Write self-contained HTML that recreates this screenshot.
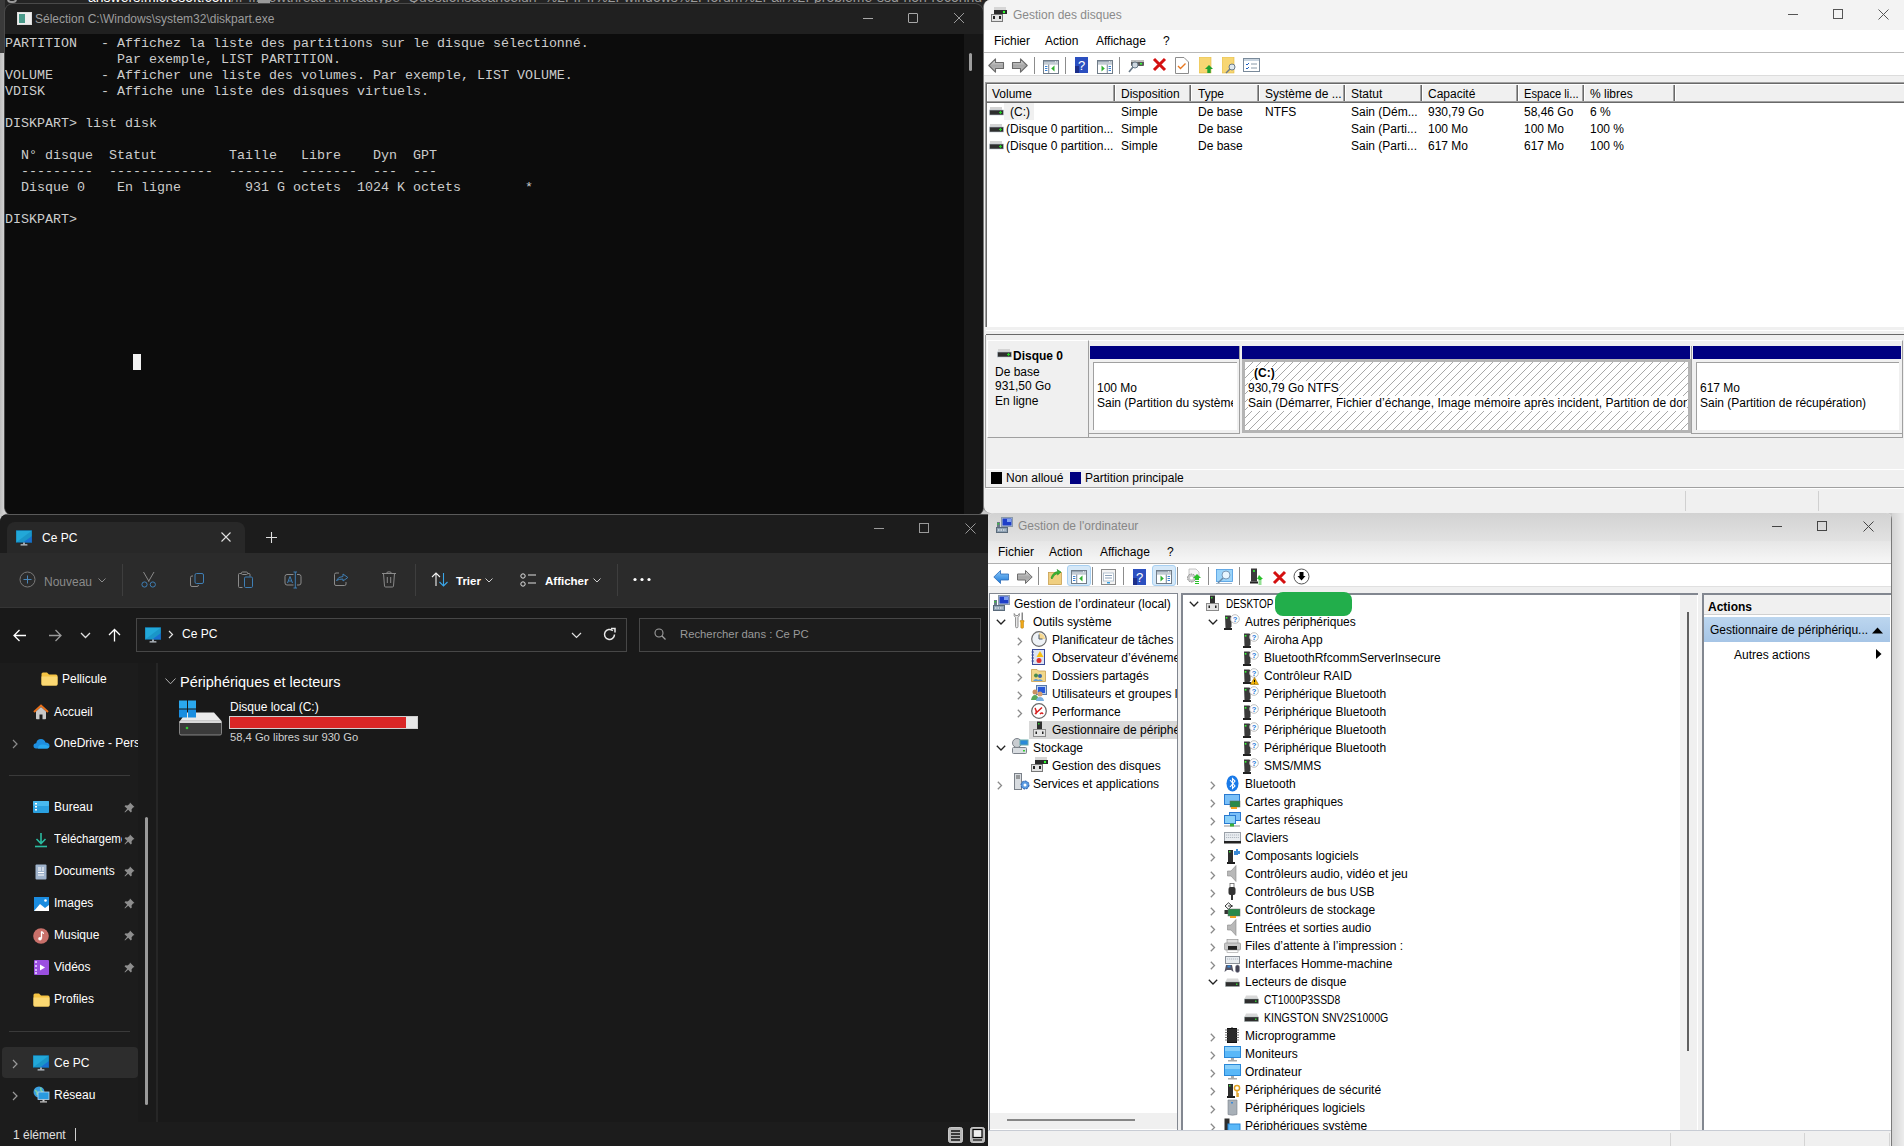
<!DOCTYPE html>
<html><head><meta charset="utf-8">
<style>
*{margin:0;padding:0;box-sizing:border-box}
html,body{width:1904px;height:1146px;overflow:hidden;background:#c9c9c9;font-family:"Liberation Sans",sans-serif;font-size:12px}
.a{position:absolute}
.t{position:absolute;white-space:pre;line-height:1}
/* CMD */
#cmd{left:5px;top:4px;width:978px;height:511px;background:#202020;border-radius:8px 8px 8px 8px;overflow:hidden;box-shadow:0 0 0 1px #4a4a4a}
#cmdcon{left:0;top:30px;width:959px;height:481px;background:#0c0c0c}
#cmdsb{left:959px;top:30px;width:19px;height:481px;background:#171717}
.con{position:absolute;left:0;font-family:"Liberation Mono",monospace;font-size:13.333px;line-height:16px;color:#cccccc;white-space:pre}
</style></head><body><svg width="0" height="0" style="position:absolute"><defs><linearGradient id="gArr" x1="0" y1="0" x2="0" y2="1"><stop offset="0" stop-color="#e4e4e4"/><stop offset="0.5" stop-color="#a8a8a8"/><stop offset="1" stop-color="#bcbcbc"/></linearGradient></defs></svg>
<!-- browser strip behind -->
<div class="a" style="left:0;top:0;width:990px;height:8px;background:#242424;overflow:hidden">
<div class="t" style="left:88px;top:-10px;font-size:14px;color:#fff">answers.microsoft.com<span style="color:#9a9a9a">/fr-fr/newthread?threadtype=Questions&amp;cancelurl=%2Ffr-fr%2Fwindows%2Fforum%2Fall%2Fprobleme-ssd-non-reconnu</span></div>
<div class="a" style="left:7px;top:-6px;width:10px;height:9px;border:2px solid #9a9a9a;border-radius:4px"></div>
<div class="a" style="left:258px;top:0;width:12px;height:3px;background:#9a9a9a"></div>
</div>
<div class="a" style="left:0;top:0;width:5px;height:53px;background:#3a3a3a"></div><div class="a" style="left:0;top:53px;width:5px;height:462px;background:linear-gradient(90deg,#bdbdbd,#d8d8d8)"></div>

<!-- CMD window -->
<div id="cmd" class="a">
  <div class="a" style="left:12px;top:8px;width:15px;height:13px;background:#eee;border:1px solid #ddd"></div>
  <div class="a" style="left:14px;top:10px;width:6px;height:9px;background:#4a9a8a"></div>
  <div class="t" style="left:30px;top:9px;color:#9d9d9d;font-size:12px">Sélection C:\Windows\system32\diskpart.exe</div>
  <div class="a" style="left:858px;top:14px;width:10px;height:1px;background:#a8a8a8"></div>
  <div class="a" style="left:903px;top:9px;width:10px;height:10px;border:1px solid #a8a8a8;border-radius:1px"></div>
  <svg class="a" style="left:948px;top:8px" width="12" height="12"><path d="M1 1L11 11M11 1L1 11" stroke="#a8a8a8" stroke-width="0.9"/></svg>
  <div id="cmdcon" class="a">
<div class="con" style="top:2px">PARTITION   - Affichez la liste des partitions sur le disque sélectionné.
              Par exemple, LIST PARTITION.
VOLUME      - Afficher une liste des volumes. Par exemple, LIST VOLUME.
VDISK       - Affiche une liste des disques virtuels.

DISKPART&gt; list disk

  N° disque  Statut         Taille   Libre    Dyn  GPT
  ---------  -------------  -------  -------  ---  ---
  Disque 0    En ligne        931 G octets  1024 K octets        *

DISKPART&gt; </div>
    <div class="a" style="left:128px;top:320px;width:8px;height:16px;background:#f2f2f2"></div>
  </div>
  <div id="cmdsb" class="a"><div class="a" style="left:5px;top:19px;width:3px;height:18px;background:#9e9e9e;border-radius:2px"></div></div>
</div>


<!-- DISK MGMT -->
<div id="dm" class="a" style="left:983px;top:0;width:921px;height:513px;background:#f0f0f0;border-left:1px solid #7a7a7a;border-radius:7px 0 0 7px;overflow:hidden">
  <!-- title -->
  <div class="a" style="left:0;top:0;width:920px;height:30px;background:#f3f3f3"></div>
  <svg class="a" style="left:7px;top:6px" width="18" height="17">
    <rect x="3" y="1" width="12" height="3" fill="#d6d6d6"/><rect x="3" y="4" width="13" height="4" fill="#2a2a2a"/><circle cx="13" cy="6" r="1.2" fill="#3f3"/>
    <rect x="0.5" y="8.5" width="11" height="7" fill="#e2e2e2" stroke="#777"/><rect x="2" y="10" width="2" height="3" fill="#222"/><rect x="8" y="10" width="2" height="3" fill="#222"/>
  </svg>
  <div class="t" style="left:29px;top:9px;color:#8a8a8a;font-size:12px">Gestion des disques</div>
  <div class="a" style="left:804px;top:14px;width:10px;height:1px;background:#555"></div>
  <div class="a" style="left:849px;top:9px;width:10px;height:10px;border:1px solid #555"></div>
  <svg class="a" style="left:894px;top:9px" width="11" height="11"><path d="M0.5 0.5L10.5 10.5M10.5 0.5L0.5 10.5" stroke="#555" stroke-width="1"/></svg>
  <!-- menu -->
  <div class="a" style="left:0;top:30px;width:920px;height:22px;background:#fff"></div>
  <div class="t" style="left:10px;top:35px;color:#000">Fichier</div>
  <div class="t" style="left:61px;top:35px;color:#000">Action</div>
  <div class="t" style="left:112px;top:35px;color:#000">Affichage</div>
  <div class="t" style="left:179px;top:35px;color:#000">?</div>
  <div class="a" style="left:0;top:52px;width:920px;height:1px;background:#b9b9b9"></div>
  <!-- toolbar -->
  <div class="a" style="left:0;top:53px;width:920px;height:22px;background:#fff"></div>
  <div class="a" style="left:0;top:75px;width:920px;height:1px;background:#dcdcdc"></div>
  <svg class="a" style="left:4px;top:57px" width="17" height="16"><path d="M0.8 8.5L7.5 1.8V5.5H15.5V11.5H7.5V15.2Z" fill="url(#gArr)" stroke="#6a6a6a" stroke-width="1.1" stroke-linejoin="round"/></svg><svg class="a" style="left:27px;top:57px" width="17" height="16"><path d="M16.2 8.5L9.5 1.8V5.5H1.5V11.5H9.5V15.2Z" fill="url(#gArr)" stroke="#6a6a6a" stroke-width="1.1" stroke-linejoin="round"/></svg><div class="a" style="left:50px;top:57px;width:1px;height:17px;background:#8c8c8c"></div><svg class="a" style="left:59px;top:60px" width="16" height="14"><rect x="0.5" y="0.5" width="15" height="13" fill="#fff" stroke="#707c88"/><rect x="1" y="1" width="14" height="1.6" fill="#98a6b4"/><rect x="12" y="1.3" width="1" height="1" fill="#fff"/><rect x="13.8" y="1.3" width="0.8" height="1" fill="#fff"/><rect x="1" y="3.3" width="14" height="1.2" fill="#a8b4c0"/><rect x="2" y="6" width="2.4" height="1" fill="#3a82d4"/><rect x="2" y="8" width="2.4" height="1" fill="#3a82d4"/><rect x="2" y="10" width="2.4" height="1" fill="#3a82d4"/><rect x="5.3" y="4.5" width="0.9" height="9" fill="#6a7a8a"/><path d="M11.5 5.5L8.2 8.5L11.5 11.5Z" fill="#30b030"/></svg><div class="a" style="left:81px;top:57px;width:1px;height:17px;background:#8c8c8c"></div><svg class="a" style="left:91px;top:57px" width="14" height="16"><rect x="0" y="0" width="13" height="16" fill="#2b4fc0"/><rect x="0" y="9" width="4" height="7" fill="#1c2f8a"/><text x="6.5" y="12.5" font-family="Liberation Sans" font-size="13" fill="#fff" text-anchor="middle">?</text></svg><svg class="a" style="left:113px;top:60px" width="16" height="14"><rect x="0.5" y="0.5" width="15" height="13" fill="#fff" stroke="#707c88"/><rect x="1" y="1" width="14" height="1.6" fill="#98a6b4"/><rect x="12" y="1.3" width="1" height="1" fill="#fff"/><rect x="13.8" y="1.3" width="0.8" height="1" fill="#fff"/><rect x="1" y="3.3" width="14" height="1.2" fill="#a8b4c0"/><rect x="11.6" y="6" width="2.4" height="1" fill="#3a82d4"/><rect x="11.6" y="8" width="2.4" height="1" fill="#3a82d4"/><rect x="11.6" y="10" width="2.4" height="1" fill="#3a82d4"/><rect x="9.8" y="4.5" width="0.9" height="9" fill="#6a7a8a"/><path d="M4.5 5.5L7.8 8.5L4.5 11.5Z" fill="#30b030"/></svg><div class="a" style="left:135px;top:57px;width:1px;height:17px;background:#8c8c8c"></div><svg class="a" style="left:144px;top:57px" width="16" height="16"><rect x="3" y="3" width="13" height="6" fill="#5a5a5a" rx="1"/><rect x="3" y="3" width="13" height="2" fill="#bdbdbd"/><rect x="12" y="6" width="2" height="1.5" fill="#3f3"/><circle cx="7" cy="8" r="3" fill="#cfd8e0" stroke="#6a7a88"/><path d="M5 10L1 15" stroke="#6a7a88" stroke-width="1.6"/></svg><svg class="a" style="left:168px;top:57px" width="15" height="15"><path d="M2 2L13 13M13 2L2 13" stroke="#d41010" stroke-width="3"/></svg><svg class="a" style="left:191px;top:57px" width="14" height="17"><path d="M0.5 0.5H9L13.5 5V16.5H0.5Z" fill="#fff" stroke="#8c8c8c"/><path d="M3 9L5.5 11.5L10.5 6.5" stroke="#e87820" stroke-width="1.4" fill="none"/></svg><svg class="a" style="left:215px;top:57px" width="15" height="17"><rect x="0" y="0" width="12" height="16" fill="#f7d673" stroke="#e0b840" stroke-width="0.6"/><path d="M10 8L14 12H11.7V16H8.3V12H6Z" fill="#1fa030"/></svg><svg class="a" style="left:238px;top:57px" width="15" height="17"><rect x="0" y="0" width="12" height="16" fill="#f7d673" stroke="#e0b840" stroke-width="0.6"/><circle cx="10" cy="10" r="3" fill="#dfe8ee" stroke="#6a7a88"/><path d="M8 12L4 16" stroke="#6a7a88" stroke-width="1.5"/></svg><svg class="a" style="left:259px;top:58px" width="17" height="14"><rect x="0.5" y="0.5" width="16" height="13" fill="#fff" stroke="#7a8a9a"/><rect x="1" y="1" width="15" height="2" fill="#c8d4e0"/><path d="M3 6L4 7L6 5M3 10L4 11L6 9" stroke="#2060c0" stroke-width="1" fill="none"/><path d="M8 6H14M8 10H14" stroke="#8a9aa8"/></svg>
  <!-- list view -->
  <div class="a" style="left:1px;top:82px;width:920px;height:245px;background:#fff;border-top:1px solid #a0a0a0;border-left:1px solid #a0a0a0"></div>
  <div class="a" style="left:2px;top:83px;width:919px;height:1px;background:#696969"></div>
  <div class="a" style="left:2px;top:83px;width:1px;height:244px;background:#696969"></div>
  <div class="a" style="left:3px;top:84px;width:918px;height:17px;background:#f0f0f0;border-top:1px solid #fff;border-left:1px solid #fff"></div><div class="a" style="left:3px;top:101px;width:918px;height:1px;background:#a0a0a0"></div><div class="a" style="left:3px;top:102px;width:918px;height:1px;background:#696969"></div><div class="a" style="left:129px;top:85px;width:1px;height:16px;background:#a0a0a0"></div><div class="a" style="left:130px;top:85px;width:1px;height:16px;background:#696969"></div><div class="a" style="left:131px;top:85px;width:1px;height:16px;background:#fff"></div><div class="a" style="left:205px;top:85px;width:1px;height:16px;background:#a0a0a0"></div><div class="a" style="left:206px;top:85px;width:1px;height:16px;background:#696969"></div><div class="a" style="left:207px;top:85px;width:1px;height:16px;background:#fff"></div><div class="a" style="left:273px;top:85px;width:1px;height:16px;background:#a0a0a0"></div><div class="a" style="left:274px;top:85px;width:1px;height:16px;background:#696969"></div><div class="a" style="left:275px;top:85px;width:1px;height:16px;background:#fff"></div><div class="a" style="left:359px;top:85px;width:1px;height:16px;background:#a0a0a0"></div><div class="a" style="left:360px;top:85px;width:1px;height:16px;background:#696969"></div><div class="a" style="left:361px;top:85px;width:1px;height:16px;background:#fff"></div><div class="a" style="left:436px;top:85px;width:1px;height:16px;background:#a0a0a0"></div><div class="a" style="left:437px;top:85px;width:1px;height:16px;background:#696969"></div><div class="a" style="left:438px;top:85px;width:1px;height:16px;background:#fff"></div><div class="a" style="left:532px;top:85px;width:1px;height:16px;background:#a0a0a0"></div><div class="a" style="left:533px;top:85px;width:1px;height:16px;background:#696969"></div><div class="a" style="left:534px;top:85px;width:1px;height:16px;background:#fff"></div><div class="a" style="left:598px;top:85px;width:1px;height:16px;background:#a0a0a0"></div><div class="a" style="left:599px;top:85px;width:1px;height:16px;background:#696969"></div><div class="a" style="left:600px;top:85px;width:1px;height:16px;background:#fff"></div><div class="a" style="left:689px;top:85px;width:1px;height:16px;background:#a0a0a0"></div><div class="a" style="left:690px;top:85px;width:1px;height:16px;background:#696969"></div><div class="a" style="left:691px;top:85px;width:1px;height:16px;background:#fff"></div><div class="t" style="left:8px;top:88px;color:#000">Volume</div><div class="t" style="left:137px;top:88px;color:#000">Disposition</div><div class="t" style="left:214px;top:88px;color:#000">Type</div><div class="t" style="left:281px;top:88px;color:#000">Système de ...</div><div class="t" style="left:367px;top:88px;color:#000">Statut</div><div class="t" style="left:444px;top:88px;color:#000">Capacité</div><div class="t" style="left:540px;top:88px;color:#000;transform:scaleX(0.93);transform-origin:0 0">Espace li...</div><div class="t" style="left:606px;top:88px;color:#000">% libres</div>
  <div class="a" style="left:20px;top:103px;width:30px;height:17px;background:#f0f0f0"></div><svg class="a" style="left:5px;top:107px" width="15" height="9"><rect x="1" y="0" width="12" height="3" fill="#d4d4d4"/><rect x="0.5" y="3" width="14" height="5" fill="#2e2e2e" stroke="#b8c4cc" stroke-width="0.6"/><path d="M10 5.5H13M11.5 4V7" stroke="#2c2" stroke-width="1.2"/></svg><div class="t" style="left:26px;top:106px;color:#000">(C:)</div><div class="t" style="left:137px;top:106px;color:#000">Simple</div><div class="t" style="left:214px;top:106px;color:#000">De base</div><div class="t" style="left:281px;top:106px;color:#000">NTFS</div><div class="t" style="left:367px;top:106px;color:#000">Sain (Dém...</div><div class="t" style="left:444px;top:106px;color:#000">930,79 Go</div><div class="t" style="left:540px;top:106px;color:#000">58,46 Go</div><div class="t" style="left:606px;top:106px;color:#000">6 %</div><svg class="a" style="left:5px;top:124px" width="15" height="9"><rect x="1" y="0" width="12" height="3" fill="#d4d4d4"/><rect x="0.5" y="3" width="14" height="5" fill="#2e2e2e" stroke="#b8c4cc" stroke-width="0.6"/><path d="M10 5.5H13M11.5 4V7" stroke="#2c2" stroke-width="1.2"/></svg><div class="t" style="left:22px;top:123px;color:#000">(Disque 0 partition...</div><div class="t" style="left:137px;top:123px;color:#000">Simple</div><div class="t" style="left:214px;top:123px;color:#000">De base</div><div class="t" style="left:367px;top:123px;color:#000">Sain (Parti...</div><div class="t" style="left:444px;top:123px;color:#000">100 Mo</div><div class="t" style="left:540px;top:123px;color:#000">100 Mo</div><div class="t" style="left:606px;top:123px;color:#000">100 %</div><svg class="a" style="left:5px;top:141px" width="15" height="9"><rect x="1" y="0" width="12" height="3" fill="#d4d4d4"/><rect x="0.5" y="3" width="14" height="5" fill="#2e2e2e" stroke="#b8c4cc" stroke-width="0.6"/><path d="M10 5.5H13M11.5 4V7" stroke="#2c2" stroke-width="1.2"/></svg><div class="t" style="left:22px;top:140px;color:#000">(Disque 0 partition...</div><div class="t" style="left:137px;top:140px;color:#000">Simple</div><div class="t" style="left:214px;top:140px;color:#000">De base</div><div class="t" style="left:367px;top:140px;color:#000">Sain (Parti...</div><div class="t" style="left:444px;top:140px;color:#000">617 Mo</div><div class="t" style="left:540px;top:140px;color:#000">617 Mo</div><div class="t" style="left:606px;top:140px;color:#000">100 %</div>
  <!-- splitter -->
  <div class="a" style="left:0;top:327px;width:920px;height:8px;background:#f0f0f0"></div>
  <div class="a" style="left:2px;top:330px;width:918px;height:1px;background:#fff"></div>
  <div class="a" style="left:2px;top:334px;width:918px;height:1px;background:#696969"></div>
  <div class="a" style="left:3px;top:340px;width:101px;height:98px;background:#f0f0f0;border-top:1px solid #fff;border-left:1px solid #fff;border-bottom:1px solid #a0a0a0"></div><svg class="a" style="left:13px;top:349px" width="15" height="9"><rect x="1" y="0" width="12" height="3" fill="#d4d4d4"/><rect x="0.5" y="3" width="14" height="5" fill="#2e2e2e" stroke="#b8c4cc" stroke-width="0.6"/><path d="M10 5.5H13M11.5 4V7" stroke="#2c2" stroke-width="1.2"/></svg><div class="t" style="left:29px;top:350px;color:#000;font-weight:bold">Disque 0</div><div class="t" style="left:11px;top:366px;color:#000">De base</div><div class="t" style="left:11px;top:380px;color:#000">931,50 Go</div><div class="t" style="left:11px;top:395px;color:#000">En ligne</div><div class="a" style="left:104px;top:340px;width:815px;height:98px;border-left:1px solid #a0a0a0;border-top:1px solid #fff;border-bottom:1px solid #a0a0a0;border-right:1px solid #a0a0a0"></div><div class="a" style="left:106px;top:346px;width:149px;height:13px;background:#000080"></div><div class="a" style="left:105px;top:359px;width:151px;height:75px;background:#f0f0f0;border-bottom:1px solid #a0a0a0"></div><div class="a" style="left:109px;top:362px;width:144px;height:68px;background:#fff;border-top:1px solid #a0a0a0;border-left:1px solid #a0a0a0"></div><div class="a" style="left:255px;top:346px;width:1px;height:88px;background:#a0a0a0"></div><div class="a" style="left:113px;top:382px;width:136px;height:32px;overflow:hidden"><div class="t" style="left:0;top:0;color:#000">100 Mo</div><div class="t" style="left:0;top:15px;color:#000">Sain (Partition du système</div></div><div class="a" style="left:258px;top:346px;width:448px;height:13px;background:#000080"></div><div class="a" style="left:258px;top:359px;width:449px;height:74px;background:#b4b4b4"></div><svg class="a" style="left:261px;top:362px" width="443" height="68"><defs><pattern id="hatch" width="8" height="8" patternUnits="userSpaceOnUse"><rect width="8" height="8" fill="#fff"/><path d="M-1 9L9 -1M7 9L9 7M-1 1L1 -1" stroke="#a8a8a8" stroke-width="1"/></pattern></defs><rect width="443" height="68" fill="url(#hatch)"/></svg><div class="a" style="left:707px;top:346px;width:1px;height:88px;background:#a0a0a0"></div><div class="a" style="left:264px;top:367px;width:439px;height:48px;overflow:hidden"><div class="t" style="left:6px;top:-1px;color:#000;font-weight:bold;background:#fff;padding:1px 0 2px">(C:)</div><div class="t" style="left:0;top:14px;color:#000;background:#fff;padding:1px 0 2px">930,79 Go NTFS</div><div class="t" style="left:0;top:29px;color:#000;background:#fff;padding:1px 0 2px">Sain (Démarrer, Fichier d’échange, Image mémoire après incident, Partition de données de base)</div></div><div class="a" style="left:709px;top:346px;width:208px;height:13px;background:#000080"></div><div class="a" style="left:708px;top:359px;width:210px;height:75px;background:#f0f0f0;border-bottom:1px solid #a0a0a0"></div><div class="a" style="left:712px;top:362px;width:203px;height:68px;background:#fff;border-top:1px solid #a0a0a0;border-left:1px solid #a0a0a0"></div><div class="t" style="left:716px;top:382px;color:#000">617 Mo</div><div class="t" style="left:716px;top:397px;color:#000">Sain (Partition de récupération)</div>
  <!-- legend -->
  <div class="a" style="left:1px;top:335px;width:1px;height:153px;background:#a0a0a0"></div><div class="a" style="left:2px;top:469px;width:918px;height:1px;background:#fff"></div>
  <div class="a" style="left:7px;top:472px;width:11px;height:12px;background:#000"></div>
  <div class="t" style="left:22px;top:472px;color:#000">Non alloué</div>
  <div class="a" style="left:86px;top:472px;width:11px;height:12px;background:#000080"></div>
  <div class="t" style="left:101px;top:472px;color:#000">Partition principale</div>
  <div class="a" style="left:2px;top:487px;width:918px;height:1px;background:#a0a0a0"></div>
  <div class="a" style="left:2px;top:488px;width:918px;height:1px;background:#fff"></div>
  <div class="a" style="left:701px;top:491px;width:1px;height:20px;background:#d0d0d0"></div>
  <div class="a" style="left:834px;top:491px;width:1px;height:20px;background:#d0d0d0"></div>
</div>

<!-- EXPLORER -->
<div class="a" style="left:0;top:514px;width:12px;height:12px;background:#c8c8c8"></div><div id="ex" class="a" style="left:0;top:514px;width:988px;height:632px;background:#191919;overflow:hidden;border-radius:8px 0 0 0">
  <div class="a" style="left:0;top:0;width:988px;height:1px;background:#5a5a5a"></div>
  <div class="a" style="left:0;top:1px;width:988px;height:38px;background:#1c1c1c"></div>
  <div class="a" style="left:7px;top:8px;width:238px;height:40px;background:#282828;border-radius:8px 8px 0 0"></div>
  <svg class="a" style="left:16px;top:16px" width="16" height="16" viewBox="0 0 16 16"><rect x="0" y="0.5" width="16" height="12" fill="#1a96c8"/><path d="M0 0.5H16L0 12.5Z" fill="#22a8d8"/><path d="M16 6L7 12.5H16Z" fill="#1a6fd0"/><rect x="0" y="0.5" width="16" height="12" fill="none" stroke="#0f5a8a" stroke-width="0.5"/><rect x="7.2" y="12.5" width="1.6" height="2" fill="#c0c8d0"/><rect x="4.5" y="14.3" width="7" height="1.2" rx="0.5" fill="#c0c8d0"/></svg>
  <div class="t" style="left:42px;top:18px;color:#fff">Ce PC</div>
  <svg class="a" style="left:221px;top:18px" width="10" height="10"><path d="M0.5 0.5L9.5 9.5M9.5 0.5L0.5 9.5" stroke="#e0e0e0" stroke-width="1.1"/></svg>
  <svg class="a" style="left:266px;top:18px" width="11" height="11"><path d="M5.5 0V11M0 5.5H11" stroke="#e0e0e0" stroke-width="1.1"/></svg>
  <div class="a" style="left:874px;top:14px;width:10px;height:1px;background:#9a9a9a"></div>
  <div class="a" style="left:919px;top:9px;width:10px;height:10px;border:1px solid #9a9a9a"></div>
  <svg class="a" style="left:965px;top:9px" width="11" height="11"><path d="M0.5 0.5L10.5 10.5M10.5 0.5L0.5 10.5" stroke="#9a9a9a" stroke-width="1"/></svg>
  <!-- toolbar -->
  <div class="a" style="left:0;top:39px;width:988px;height:54px;background:#2b2b2b"></div>
  <div class="a" style="left:0;top:93px;width:988px;height:1px;background:#353535"></div>
  <svg class="a" style="left:19px;top:57px" width="17" height="17"><circle cx="8.5" cy="8.5" r="7.5" fill="none" stroke="#7a7a7a" stroke-width="1"/><path d="M8.5 4.5V12.5M4.5 8.5H12.5" stroke="#4a86b8" stroke-width="1"/></svg><div class="t" style="left:44px;top:62px;color:#8a8a8a">Nouveau</div><svg class="a" style="left:98px;top:64px" width="8" height="5"><path d="M0.5 0.5L4 4L7.5 0.5" stroke="#8a8a8a" fill="none"/></svg><div class="a" style="left:122px;top:50px;width:1px;height:32px;background:#3e3e3e"></div><svg class="a" style="left:140px;top:57px" width="18" height="18"><path d="M3.5 1L9 10.5M14 1L8.5 10.5" stroke="#8a8a8a" stroke-width="1"/><circle cx="4.5" cy="13.5" r="2.6" fill="none" stroke="#3f7fb5" stroke-width="1"/><circle cx="12.8" cy="13.5" r="2.6" fill="none" stroke="#3f7fb5" stroke-width="1"/></svg><svg class="a" style="left:189px;top:58px" width="16" height="16"><path d="M4 4H3Q1.5 4 1.5 5.5V13Q1.5 14.5 3 14.5H8Q9.5 14.5 9.5 13" stroke="#8a8a8a" fill="none"/><rect x="6" y="1.5" width="8.5" height="10" rx="1.5" fill="none" stroke="#3f7fb5"/></svg><svg class="a" style="left:237px;top:57px" width="17" height="18"><path d="M4 2.5H2.5Q1.5 2.5 1.5 3.5V15.5Q1.5 16.5 2.5 16.5H5.5M11 2.5H12Q13 2.5 13 3.5V5.5" stroke="#8a8a8a" fill="none"/><rect x="4.5" y="1" width="6" height="2.5" rx="1" fill="none" stroke="#8a8a8a"/><rect x="7.5" y="6" width="8" height="10.5" rx="1.2" fill="none" stroke="#3f7fb5"/></svg><svg class="a" style="left:284px;top:57px" width="18" height="18"><path d="M9.5 3.5H3Q1 3.5 1 5.5V12Q1 14 3 14H9.5M13 3.5H15Q17 3.5 17 5.5V12Q17 14 15 14H13" stroke="#8a8a8a" fill="none"/><path d="M3.5 12L6 5.5L8.5 12M4.5 10H7.5" stroke="#3f7fb5" fill="none"/><path d="M11.3 1V17M9.5 1H13M9.5 17H13" stroke="#3f7fb5"/></svg><svg class="a" style="left:333px;top:57px" width="16" height="16"><path d="M6 2H3Q1.5 2 1.5 3.5V13Q1.5 14.5 3 14.5H11.5Q13 14.5 13 13V11" stroke="#8a8a8a" fill="none"/><path d="M3.5 9.5Q5 5.5 10 5.5V3L14.8 6.5L10 10V8Q6 8 3.5 9.5Z" stroke="#3f7fb5" fill="none" stroke-linejoin="round"/></svg><svg class="a" style="left:381px;top:57px" width="16" height="17"><path d="M1 2.5H15M5.5 2.5Q5.5 0.8 8 0.8Q10.5 0.8 10.5 2.5M2.5 2.5L3.5 15Q3.6 16 4.6 16H11.4Q12.4 16 12.5 15L13.5 2.5M6.3 6V12M9.7 6V12" stroke="#8a8a8a" fill="none"/></svg><div class="a" style="left:415px;top:50px;width:1px;height:32px;background:#3e3e3e"></div><svg class="a" style="left:431px;top:58px" width="18" height="15"><path d="M5 14V1M1 5L5 1L9 5" stroke="#f0f0f0" fill="none" stroke-width="1.1"/><path d="M12.5 1V14M8.5 10L12.5 14L16.5 10" stroke="#3aa6e8" fill="none" stroke-width="1.1"/></svg><div class="t" style="left:456px;top:62px;color:#fff;font-weight:bold;font-size:11.5px">Trier</div><svg class="a" style="left:485px;top:64px" width="8" height="5"><path d="M0.5 0.5L4 4L7.5 0.5" stroke="#d0d0d0" fill="none"/></svg><svg class="a" style="left:520px;top:59px" width="17" height="14"><circle cx="3" cy="3" r="2.2" fill="none" stroke="#e0e0e0"/><circle cx="3" cy="11" r="2.2" fill="none" stroke="#e0e0e0"/><path d="M8 2H16M8 10H16" stroke="#e0e0e0"/></svg><div class="t" style="left:545px;top:62px;color:#fff;font-weight:bold;font-size:11.5px">Afficher</div><svg class="a" style="left:593px;top:64px" width="8" height="5"><path d="M0.5 0.5L4 4L7.5 0.5" stroke="#d0d0d0" fill="none"/></svg><div class="a" style="left:617px;top:50px;width:1px;height:32px;background:#3e3e3e"></div><svg class="a" style="left:633px;top:63px" width="18" height="5"><circle cx="2" cy="2.5" r="1.6" fill="#fff"/><circle cx="9" cy="2.5" r="1.6" fill="#fff"/><circle cx="16" cy="2.5" r="1.6" fill="#fff"/></svg>
  <!-- nav -->
  <svg class="a" style="left:13px;top:115px" width="14" height="13"><path d="M13 6.5H1.5M6.5 1L1 6.5L6.5 12" stroke="#fff" fill="none" stroke-width="1.3"/></svg><svg class="a" style="left:48px;top:115px" width="14" height="13"><path d="M1 6.5H12.5M7.5 1L13 6.5L7.5 12" stroke="#9a9a9a" fill="none" stroke-width="1.3"/></svg><svg class="a" style="left:80px;top:118px" width="11" height="7"><path d="M1 1L5.5 5.5L10 1" stroke="#e0e0e0" fill="none" stroke-width="1.3"/></svg><svg class="a" style="left:108px;top:114px" width="13" height="14"><path d="M6.5 13.5V1.5M1 7L6.5 1.5L12 7" stroke="#fff" fill="none" stroke-width="1.3"/></svg><div class="a" style="left:136px;top:104px;width:491px;height:34px;border:1px solid #474747;background:#1c1c1c"></div><svg class="a" style="left:145px;top:113px" width="16" height="16" viewBox="0 0 16 16"><rect x="0" y="0.5" width="16" height="12" fill="#1a96c8"/><path d="M0 0.5H16L0 12.5Z" fill="#22a8d8"/><path d="M16 6L7 12.5H16Z" fill="#1a6fd0"/><rect x="0" y="0.5" width="16" height="12" fill="none" stroke="#0f5a8a" stroke-width="0.5"/><rect x="7.2" y="12.5" width="1.6" height="2" fill="#c0c8d0"/><rect x="4.5" y="14.3" width="7" height="1.2" rx="0.5" fill="#c0c8d0"/></svg><svg class="a" style="left:168px;top:116px" width="6" height="9"><path d="M1 1L4.5 4.5L1 8" stroke="#e0e0e0" fill="none" stroke-width="1.2"/></svg><div class="t" style="left:182px;top:114px;color:#fff">Ce PC</div><svg class="a" style="left:571px;top:118px" width="11" height="7"><path d="M1 1L5.5 5.5L10 1" stroke="#e0e0e0" fill="none" stroke-width="1.2"/></svg><svg class="a" style="left:602px;top:113px" width="15" height="15"><path d="M12.5 7.5A5 5 0 1 1 10.8 3.7" stroke="#e8e8e8" fill="none" stroke-width="1.5"/><path d="M9 1.5H13V5.5" stroke="#e8e8e8" fill="none" stroke-width="1.5"/></svg><div class="a" style="left:639px;top:104px;width:342px;height:34px;border:1px solid #474747;background:#1c1c1c"></div><svg class="a" style="left:654px;top:114px" width="12" height="12"><circle cx="5" cy="5" r="4" stroke="#a0a0a0" fill="none" stroke-width="1.1"/><path d="M8 8L11.5 11.5" stroke="#a0a0a0" stroke-width="1.2"/></svg><div class="t" style="left:680px;top:115px;color:#9a9a9a;font-size:11.3px">Rechercher dans : Ce PC</div>
  <!-- sidebar -->
  <div class="a" style="left:0;top:149px;width:138px;height:459px;background:#1c1c1c"></div><div class="a" style="left:138px;top:149px;width:18px;height:459px;background:#1a1a1a"></div><div class="a" style="left:156px;top:149px;width:2px;height:459px;background:#262626"></div><svg class="a" style="left:41px;top:158px" width="17" height="14"><path d="M0.5 2Q0.5 0.5 2 0.5H6L8 2.5H15Q16.5 2.5 16.5 4V12Q16.5 13.5 15 13.5H2Q0.5 13.5 0.5 12Z" fill="#f5c342"/><path d="M0.5 4.5H16.5V12Q16.5 13.5 15 13.5H2Q0.5 13.5 0.5 12Z" fill="#fbd872"/></svg><div class="t" style="left:62px;top:159px;color:#fff">Pellicule</div><svg class="a" style="left:33px;top:190px" width="16" height="16"><path d="M1 8L8 1.5L15 8" stroke="#e8701a" stroke-width="2" fill="none"/><path d="M3 7.5V14.5Q3 15.3 3.8 15.3H6.5V10.5H9.5V15.3H12.2Q13 15.3 13 14.5V7.5L8 3Z" fill="#c8c8c8"/></svg><div class="t" style="left:54px;top:192px;color:#fff">Accueil</div><svg class="a" style="left:12px;top:225px" width="7" height="10"><path d="M1 1L5 5L1 9" stroke="#8a8a8a" fill="none" stroke-width="1.2"/></svg><svg class="a" style="left:33px;top:223px" width="17" height="12"><path d="M3 11.5Q0.5 11.5 0.5 8.8Q0.5 6.3 3.2 6.2Q4 2 8 2Q11.5 2 12.5 5.5Q16.5 5.7 16.5 8.7Q16.5 11.5 13.5 11.5Z" fill="#1e8fe0"/><path d="M5 11.5Q5 7.5 9.5 7.5Q13 7.5 16.3 9.5Q16 11.5 13.5 11.5Z" fill="#28a8f0"/></svg><div class="a" style="left:54px;top:223px;width:84px;height:16px;overflow:hidden"><div class="t" style="left:0;top:0;color:#fff">OneDrive - Personnel</div></div><div class="a" style="left:9px;top:261px;width:121px;height:1px;background:#3a3a3a"></div><div class="a" style="left:54px;top:287px;width:67px;height:16px;overflow:hidden"><div class="t" style="left:0;top:0;color:#fff">Bureau</div></div><svg class="a" style="left:124px;top:288px" width="11" height="11"><path d="M6 0.5L10.5 5L9 5.5L7.5 7.5L7.8 9.5L6.8 10.5L4.2 7.8L1 10.5L0.5 10L3.2 6.8L0.5 4.2L1.5 3.2L3.5 3.5L5.5 2Z" fill="#8e8e8e"/></svg><div class="a" style="left:54px;top:319px;width:68px;height:16px;overflow:hidden"><div class="t" style="left:0;top:0;color:#fff;transform:scaleX(0.955);transform-origin:0 0">Téléchargements</div></div><svg class="a" style="left:124px;top:320px" width="11" height="11"><path d="M6 0.5L10.5 5L9 5.5L7.5 7.5L7.8 9.5L6.8 10.5L4.2 7.8L1 10.5L0.5 10L3.2 6.8L0.5 4.2L1.5 3.2L3.5 3.5L5.5 2Z" fill="#8e8e8e"/></svg><div class="a" style="left:54px;top:351px;width:67px;height:16px;overflow:hidden"><div class="t" style="left:0;top:0;color:#fff">Documents</div></div><svg class="a" style="left:124px;top:352px" width="11" height="11"><path d="M6 0.5L10.5 5L9 5.5L7.5 7.5L7.8 9.5L6.8 10.5L4.2 7.8L1 10.5L0.5 10L3.2 6.8L0.5 4.2L1.5 3.2L3.5 3.5L5.5 2Z" fill="#8e8e8e"/></svg><div class="a" style="left:54px;top:383px;width:67px;height:16px;overflow:hidden"><div class="t" style="left:0;top:0;color:#fff">Images</div></div><svg class="a" style="left:124px;top:384px" width="11" height="11"><path d="M6 0.5L10.5 5L9 5.5L7.5 7.5L7.8 9.5L6.8 10.5L4.2 7.8L1 10.5L0.5 10L3.2 6.8L0.5 4.2L1.5 3.2L3.5 3.5L5.5 2Z" fill="#8e8e8e"/></svg><div class="a" style="left:54px;top:415px;width:67px;height:16px;overflow:hidden"><div class="t" style="left:0;top:0;color:#fff">Musique</div></div><svg class="a" style="left:124px;top:416px" width="11" height="11"><path d="M6 0.5L10.5 5L9 5.5L7.5 7.5L7.8 9.5L6.8 10.5L4.2 7.8L1 10.5L0.5 10L3.2 6.8L0.5 4.2L1.5 3.2L3.5 3.5L5.5 2Z" fill="#8e8e8e"/></svg><div class="a" style="left:54px;top:447px;width:67px;height:16px;overflow:hidden"><div class="t" style="left:0;top:0;color:#fff">Vidéos</div></div><svg class="a" style="left:124px;top:448px" width="11" height="11"><path d="M6 0.5L10.5 5L9 5.5L7.5 7.5L7.8 9.5L6.8 10.5L4.2 7.8L1 10.5L0.5 10L3.2 6.8L0.5 4.2L1.5 3.2L3.5 3.5L5.5 2Z" fill="#8e8e8e"/></svg><div class="a" style="left:54px;top:479px;width:67px;height:16px;overflow:hidden"><div class="t" style="left:0;top:0;color:#fff">Profiles</div></div><svg class="a" style="left:33px;top:287px" width="16" height="13"><rect x="0" y="0" width="16" height="12" rx="1" fill="#2aa0e0"/><rect x="0" y="0" width="16" height="5" rx="1" fill="#49b9ef"/><rect x="2" y="2" width="2" height="1.5" fill="#fff"/><rect x="2" y="5" width="2" height="1.5" fill="#fff"/><rect x="2" y="8" width="2" height="1.5" fill="#fff"/></svg><svg class="a" style="left:34px;top:318px" width="14" height="16"><path d="M7 1V11M2.5 7L7 11.5L11.5 7" stroke="#2bbba0" stroke-width="1.6" fill="none"/><path d="M1 14.5H13" stroke="#2bbba0" stroke-width="1.6"/></svg><svg class="a" style="left:35px;top:350px" width="12" height="16"><rect x="0.5" y="0.5" width="11" height="15" rx="1" fill="#9fb3cc"/><path d="M3 4H6M3 6H6M7 4H9M7 6H9M3 8.5H9M3 11H9" stroke="#fff" stroke-width="1"/></svg><svg class="a" style="left:34px;top:383px" width="15" height="14"><rect x="0" y="0" width="15" height="14" fill="#1a8ce0"/><path d="M0 14L6 7L11 11L15 8V14Z" fill="#fff"/><circle cx="11.5" cy="3.5" r="1.3" fill="#fff"/></svg><svg class="a" style="left:33px;top:414px" width="16" height="16"><circle cx="8" cy="8" r="7.8" fill="#c9706a"/><path d="M8.5 3.5V10.5" stroke="#fff" stroke-width="1.3"/><circle cx="7" cy="10.8" r="1.8" fill="#fff"/><path d="M8.5 3.5Q10.5 4.5 10.5 6" stroke="#fff" stroke-width="1.2" fill="none"/></svg><svg class="a" style="left:34px;top:446px" width="15" height="15"><rect x="0" y="0" width="15" height="15" rx="1" fill="#9b4fe0"/><rect x="1" y="1" width="2" height="2" fill="#d8b8ff"/><rect x="1" y="5" width="2" height="2" fill="#d8b8ff"/><rect x="1" y="9" width="2" height="2" fill="#d8b8ff"/><rect x="1" y="12" width="2" height="2" fill="#d8b8ff"/><path d="M6 4.5L11 7.5L6 10.5Z" fill="#fff"/></svg><svg class="a" style="left:33px;top:479px" width="17" height="14"><path d="M0.5 2Q0.5 0.5 2 0.5H6L8 2.5H15Q16.5 2.5 16.5 4V12Q16.5 13.5 15 13.5H2Q0.5 13.5 0.5 12Z" fill="#f5c342"/><path d="M0.5 4.5H16.5V12Q16.5 13.5 15 13.5H2Q0.5 13.5 0.5 12Z" fill="#fbd872"/></svg><div class="a" style="left:9px;top:517px;width:121px;height:1px;background:#3a3a3a"></div><div class="a" style="left:2px;top:533px;width:136px;height:31px;background:#2d2d2d;border-radius:4px"></div><svg class="a" style="left:12px;top:545px" width="7" height="10"><path d="M1 1L5 5L1 9" stroke="#9a9a9a" fill="none" stroke-width="1.2"/></svg><svg class="a" style="left:33px;top:541px" width="16" height="16" viewBox="0 0 16 16"><rect x="0" y="0.5" width="16" height="12" fill="#1a96c8"/><path d="M0 0.5H16L0 12.5Z" fill="#22a8d8"/><path d="M16 6L7 12.5H16Z" fill="#1a6fd0"/><rect x="0" y="0.5" width="16" height="12" fill="none" stroke="#0f5a8a" stroke-width="0.5"/><rect x="7.2" y="12.5" width="1.6" height="2" fill="#c0c8d0"/><rect x="4.5" y="14.3" width="7" height="1.2" rx="0.5" fill="#c0c8d0"/></svg><div class="t" style="left:54px;top:543px;color:#fff">Ce PC</div><svg class="a" style="left:12px;top:577px" width="7" height="10"><path d="M1 1L5 5L1 9" stroke="#9a9a9a" fill="none" stroke-width="1.2"/></svg><svg class="a" style="left:33px;top:572px" width="17" height="17"><circle cx="6" cy="6" r="5.5" fill="#3aa0e0"/><path d="M2 4Q5 6 4 9M8 1.5Q7 5 10 6" stroke="#7fd0a0" stroke-width="1.5" fill="none"/><rect x="5" y="6" width="11" height="7.5" fill="#2a9ae0" stroke="#b8d8f0" stroke-width="0.8"/><rect x="9.5" y="13.5" width="2" height="2" fill="#ccc"/><rect x="7" y="15.3" width="7" height="1.2" fill="#ccc"/></svg><div class="t" style="left:54px;top:575px;color:#fff">Réseau</div><div class="a" style="left:145px;top:303px;width:3px;height:288px;background:#9a9a9a;border-radius:1.5px"></div>
  <!-- content -->
  <svg class="a" style="left:165px;top:164px" width="11" height="7"><path d="M0.5 0.5L5.5 5.8L10.5 0.5" stroke="#b0b0b0" fill="none" stroke-width="1"/></svg><div class="t" style="left:180px;top:161px;color:#fff;font-size:14.5px">Périphériques et lecteurs</div><svg class="a" style="left:178px;top:186px" width="45" height="36"><path d="M8 12.5L36 12.5L43.5 21V21H2Z" fill="#eaeaea"/><rect x="1.5" y="21" width="42" height="14" rx="1.5" fill="#3a3a3a" stroke="#9a9a9a" stroke-width="0.8"/><rect x="1.5" y="21" width="42" height="2" fill="#d8d8d8"/><circle cx="9" cy="28" r="1.3" fill="#3c3"/><rect x="1" y="0.5" width="8" height="8" fill="#2aa8ee"/><rect x="10" y="0.5" width="8" height="8" fill="#2aa8ee"/><rect x="1" y="9.5" width="8" height="8" fill="#1a8ee0"/><rect x="10" y="9.5" width="8" height="8" fill="#1a8ee0"/></svg><div class="t" style="left:230px;top:187px;color:#fff">Disque local (C:)</div><div class="a" style="left:229px;top:202px;width:189px;height:13px;background:#e6e6e6;border:1px solid #cfcfcf"></div><div class="a" style="left:230px;top:203px;width:176px;height:11px;background:#da2626"></div><div class="t" style="left:230px;top:218px;color:#d0d0d0;font-size:11.2px">58,4 Go libres sur 930 Go</div>
  <!-- status -->
  <div class="a" style="left:0;top:608px;width:988px;height:24px;background:#1c1c1c"></div>
  <div class="t" style="left:13px;top:615px;color:#e0e0e0">1 élément</div>
  <div class="a" style="left:75px;top:614px;width:1px;height:13px;background:#cfcfcf"></div>
  <svg class="a" style="left:947px;top:612px" width="40" height="18">
    <rect x="1.5" y="1.5" width="14" height="15" rx="2" fill="#b8b8b8" stroke="#c8c8c8"/><path d="M4 5H13M4 8H13M4 11H13M4 14H13" stroke="#111" stroke-width="1.3"/>
    <rect x="23.5" y="1.5" width="14" height="15" rx="2" fill="#b8b8b8" stroke="#c8c8c8"/><rect x="26" y="3.5" width="9" height="8" fill="#eee" stroke="#000" stroke-width="1.2"/><path d="M26 14H35" stroke="#111" stroke-width="1.2"/>
  </svg>
</div>
<div id="cm" class="a" style="left:988px;top:513px;width:904px;height:633px;background:#f0f0f0;overflow:hidden;border-radius:6px 6px 0 0">
<div class="a" style="left:0;top:0;width:904px;height:28px;background:linear-gradient(#d2d2d2,#e2e2e2)"></div>
<div class="a" style="left:0;top:28px;width:904px;height:22px;background:linear-gradient(#e6e6e6,#f7f7f7)"></div>
<svg class="a" style="left:8px;top:4px" width="17" height="16"><rect x="5.5" y="0.5" width="11" height="9" fill="#b9c6d8" stroke="#8a9aaa"/><rect x="6.5" y="1.5" width="9" height="7" fill="#1f3fc8"/><rect x="11" y="2" width="4" height="3" fill="#7fa0f0"/><rect x="0.5" y="10.5" width="11" height="5" fill="#8fa2b4" stroke="#5a6a7a"/><path d="M2 13H10" stroke="#fff" stroke-dasharray="1.5 1"/><rect x="1" y="5" width="3" height="5" fill="#6a7a88"/><rect x="1.5" y="6" width="1.5" height="1.5" fill="#3c3"/></svg>
<div class="t" style="left:30px;top:7px;color:#878787">Gestion de l'ordinateur</div>
<div class="a" style="left:784px;top:13px;width:10px;height:1px;background:#444"></div>
<div class="a" style="left:829px;top:8px;width:10px;height:10px;border:1px solid #444"></div>
<svg class="a" style="left:875px;top:8px" width="11" height="11"><path d="M0.5 0.5L10.5 10.5M10.5 0.5L0.5 10.5" stroke="#444" stroke-width="1"/></svg>
<div class="t" style="left:10px;top:33px;color:#000">Fichier</div>
<div class="t" style="left:61px;top:33px;color:#000">Action</div>
<div class="t" style="left:112px;top:33px;color:#000">Affichage</div>
<div class="t" style="left:179px;top:33px;color:#000">?</div>
<div class="a" style="left:0;top:50px;width:904px;height:1px;background:#b0b0b0"></div>
<div class="a" style="left:0;top:51px;width:904px;height:22px;background:#fff"></div>
<div class="a" style="left:0;top:73px;width:904px;height:1px;background:#e0e0e0"></div>
<svg class="a" style="left:5px;top:56px" width="17" height="16"><defs><linearGradient id="gB" x1="0" y1="0" x2="0" y2="1"><stop offset="0" stop-color="#8cc8f8"/><stop offset="1" stop-color="#1a78d8"/></linearGradient></defs><path d="M0.8 8L7.5 1.5V5H15.5V11H7.5V14.5Z" fill="url(#gB)" stroke="#2a6ab8" stroke-width="0.8" stroke-linejoin="round"/></svg>
<svg class="a" style="left:28px;top:56px" width="17" height="16"><path d="M16.2 8L9.5 1.5V5H1.5V11H9.5V14.5Z" fill="url(#gArr)" stroke="#6e6e6e" stroke-width="1" stroke-linejoin="round"/></svg>
<div class="a" style="left:50px;top:54px;width:1px;height:18px;background:#8c8c8c"></div>
<svg class="a" style="left:60px;top:56px" width="15" height="16"><rect x="0.5" y="3.5" width="13" height="12" fill="#f0cf80" stroke="#c9a050" stroke-width="0.8"/><path d="M3 9Q5 3 10 2.5L9 0.5L13 3L9.5 6L10 4.2Q6 5 4 10Z" fill="#38b838" stroke="#1a8a1a" stroke-width="0.6"/></svg>
<div class="a" style="left:79px;top:52px;width:24px;height:21px;background:#d5e8f8;border:1px solid #a8d0f2;border-radius:3px"></div>
<svg class="a" style="left:83px;top:57px" width="16" height="14"><rect x="0.5" y="0.5" width="15" height="13" fill="#fff" stroke="#707c88"/><rect x="1" y="1" width="14" height="1.6" fill="#98a6b4"/><rect x="12" y="1.3" width="1" height="1" fill="#fff"/><rect x="13.8" y="1.3" width="0.8" height="1" fill="#fff"/><rect x="1" y="3.3" width="14" height="1.2" fill="#a8b4c0"/><rect x="2" y="6" width="2.4" height="1" fill="#3a82d4"/><rect x="2" y="8" width="2.4" height="1" fill="#3a82d4"/><rect x="2" y="10" width="2.4" height="1" fill="#3a82d4"/><rect x="5.3" y="4.5" width="0.9" height="9" fill="#6a7a8a"/><path d="M11.5 5.5L8.2 8.5L11.5 11.5Z" fill="#30b030"/></svg>
<div class="a" style="left:104px;top:54px;width:1px;height:18px;background:#8c8c8c"></div>
<svg class="a" style="left:113px;top:56px" width="16" height="16"><rect x="0.5" y="0.5" width="14" height="15" fill="#f4f4f4" stroke="#8a8a8a"/><rect x="2.5" y="4" width="10" height="8" fill="#fff" stroke="#a8b8c8" stroke-width="0.8"/><path d="M4 6.5H11M4 9H11" stroke="#8aa0b8"/><rect x="6" y="13" width="3" height="1.5" fill="#3aa0e0"/></svg>
<div class="a" style="left:135px;top:54px;width:1px;height:18px;background:#8c8c8c"></div>
<svg class="a" style="left:145px;top:56px" width="14" height="16"><rect x="0" y="0" width="13" height="16" fill="#2b4fc0"/><rect x="0" y="9" width="4" height="7" fill="#1c2f8a"/><text x="6.5" y="12.5" font-family="Liberation Sans" font-size="13" fill="#fff" text-anchor="middle">?</text></svg>
<div class="a" style="left:164px;top:52px;width:24px;height:21px;background:#d5e8f8;border:1px solid #a8d0f2;border-radius:3px"></div>
<svg class="a" style="left:168px;top:57px" width="16" height="14"><rect x="0.5" y="0.5" width="15" height="13" fill="#fff" stroke="#707c88"/><rect x="1" y="1" width="14" height="1.6" fill="#98a6b4"/><rect x="12" y="1.3" width="1" height="1" fill="#fff"/><rect x="13.8" y="1.3" width="0.8" height="1" fill="#fff"/><rect x="1" y="3.3" width="14" height="1.2" fill="#a8b4c0"/><rect x="11.6" y="6" width="2.4" height="1" fill="#3a82d4"/><rect x="11.6" y="8" width="2.4" height="1" fill="#3a82d4"/><rect x="11.6" y="10" width="2.4" height="1" fill="#3a82d4"/><rect x="9.8" y="4.5" width="0.9" height="9" fill="#6a7a8a"/><path d="M4.5 5.5L7.8 8.5L4.5 11.5Z" fill="#30b030"/></svg>
<div class="a" style="left:189px;top:54px;width:1px;height:18px;background:#8c8c8c"></div>
<svg class="a" style="left:197px;top:55px" width="17" height="17"><path d="M4 1H11L14 4V10H4Z" fill="#f4f4f4" stroke="#b8b8b8" stroke-width="0.8"/><circle cx="6.5" cy="10" r="4" fill="#c8c8c8" stroke="#8a8a8a" stroke-dasharray="1.5 1"/><circle cx="6.5" cy="10" r="1.5" fill="#fff"/><path d="M12 6L16 10H14V12H10V10H8Z" fill="#28c028"/><path d="M10 13.5H14M10 15.5H14" stroke="#28c028" stroke-width="1.2"/></svg>
<div class="a" style="left:220px;top:54px;width:1px;height:18px;background:#8c8c8c"></div>
<svg class="a" style="left:228px;top:56px" width="17" height="16"><rect x="0.5" y="0.5" width="16" height="12" fill="#9ad4fa" stroke="#4a9ae0" stroke-width="0.8"/><circle cx="10" cy="6" r="4" fill="#e8f6fe" stroke="#7a9ab8"/><path d="M7 9L2 14" stroke="#6a8aa8" stroke-width="1.5"/><path d="M0 14.5H16" stroke="#a8b8c8"/></svg>
<div class="a" style="left:251px;top:54px;width:1px;height:18px;background:#8c8c8c"></div>
<svg class="a" style="left:262px;top:55px" width="14" height="17"><rect x="1" y="0.5" width="6" height="13" fill="#3a3a3a"/><rect x="3" y="2" width="2" height="2" fill="#3c3"/><rect x="0" y="13.5" width="8" height="2" fill="#222"/><path d="M9 7L13 11H11.5V12.5H8.5V11H7Z" fill="#28c028"/><path d="M8.5 14H11.5M8.5 16H11.5" stroke="#28c028" stroke-width="1.2"/></svg>
<svg class="a" style="left:284px;top:57px" width="15" height="15"><path d="M2 2L13 13M13 2L2 13" stroke="#d41010" stroke-width="3"/></svg>
<svg class="a" style="left:305px;top:55px" width="17" height="17"><circle cx="8.5" cy="8.5" r="7.5" fill="#fff" stroke="#555" stroke-width="1"/><path d="M6.5 4H10.5V8H12.5L8.5 12.5L4.5 8H6.5Z" fill="#000"/></svg>
<div class="a" style="left:0;top:74px;width:904px;height:6px;background:#f0f0f0"></div>
<div class="a" style="left:1px;top:80px;width:189px;height:538px;background:#fff;border:1px solid #828790"></div>
<div class="a" style="left:193px;top:80px;width:517px;height:538px;background:#fff;border-top:2px solid #828790;border-left:2px solid #828790"></div>
<div class="a" style="left:714px;top:80px;width:189px;height:538px;background:#fff;border-top:2px solid #828790;border-left:2px solid #828790"></div>
<div class="a" style="left:716px;top:82px;width:186px;height:20px;background:#f0f0f0;border-bottom:1px solid #d0d0d0"></div>
<div class="t" style="left:720px;top:88px;color:#000;font-weight:bold">Actions</div>
<div class="a" style="left:716px;top:104px;width:186px;height:25px;background:linear-gradient(#bcd6ef,#a6c5e6)"></div>
<div class="t" style="left:722px;top:111px;color:#000">Gestionnaire de périphériqu...</div>
<svg class="a" style="left:884px;top:114px" width="11" height="7"><path d="M0 6.5L5.5 0.5L11 6.5Z" fill="#000"/></svg>
<div class="t" style="left:746px;top:136px;color:#000">Autres actions</div>
<svg class="a" style="left:888px;top:136px" width="6" height="10"><path d="M0 0L5.5 5L0 10Z" fill="#000"/></svg>
<div class="a" style="left:0;top:617px;width:904px;height:1px;background:#c8ccd4"></div>
<div class="a" style="left:903px;top:0;width:1px;height:633px;background:#7a7a7a"></div>
<div class="a" style="left:682px;top:620px;width:1px;height:13px;background:#d4d4d4"></div>
<div class="a" style="left:816px;top:620px;width:1px;height:13px;background:#d4d4d4"></div>
<div class="a" style="left:901px;top:620px;width:1px;height:13px;background:#d4d4d4"></div>
<div class="a" style="left:2px;top:81px;width:187px;height:536px;overflow:hidden">
<svg class="a" style="left:3px;top:1px" width="17" height="16"><rect x="5.5" y="0.5" width="11" height="9" fill="#b9c6d8" stroke="#8a9aaa"/><rect x="6.5" y="1.5" width="9" height="7" fill="#1f3fc8"/><rect x="11" y="2" width="4" height="3" fill="#7fa0f0"/><rect x="0.5" y="10.5" width="11" height="5" fill="#8fa2b4" stroke="#5a6a7a"/><path d="M2 13H10" stroke="#fff" stroke-dasharray="1.5 1"/><rect x="1" y="5" width="3" height="5" fill="#6a7a88"/><rect x="1.5" y="6" width="1.5" height="1.5" fill="#3c3"/></svg>
<div class="t" style="left:24px;top:4px;color:#000;">Gestion de l’ordinateur (local)</div>
<svg class="a" style="left:6px;top:25px" width="10" height="6"><path d="M0.8 0.8L5 5L9.2 0.8" stroke="#222" fill="none" stroke-width="1.3"/></svg>
<svg class="a" style="left:23px;top:18px" width="13" height="17"><path d="M1.2 1.5Q0.5 4 2.5 5.5V14.5Q2.5 15.8 3.8 15.8Q5 15.8 5 14.5V5.5Q7 4 6.3 1.5L5 3.5H2.5Z" fill="#e8e8e8" stroke="#7a7a7a" stroke-width="0.8"/><rect x="8.6" y="0.5" width="1.2" height="8" fill="#6a6a6a"/><path d="M7.3 8.5H11V10H10.5V15.5Q10.5 16.3 9.2 16.3Q7.8 16.3 7.8 15.5V10H7.3Z" fill="#f0a818" stroke="#b07808" stroke-width="0.5"/></svg>
<div class="t" style="left:43px;top:22px;color:#000;">Outils système</div>
<svg class="a" style="left:27px;top:43px" width="6" height="9"><path d="M0.8 0.8L4.5 4.5L0.8 8.2" stroke="#8a8a8a" fill="none" stroke-width="1.3"/></svg>
<svg class="a" style="left:41px;top:37px" width="16" height="16"><circle cx="8" cy="8" r="7.3" fill="#eef2f6" stroke="#6a6a6a" stroke-width="1.2"/><path d="M8 8V2A6 6 0 0 1 14 8Z" fill="#f6d890"/><path d="M8 3.5V8H11.5" stroke="#4a5a70" fill="none"/></svg>
<div class="t" style="left:62px;top:40px;color:#000;">Planificateur de tâches</div>
<svg class="a" style="left:27px;top:61px" width="6" height="9"><path d="M0.8 0.8L4.5 4.5L0.8 8.2" stroke="#8a8a8a" fill="none" stroke-width="1.3"/></svg>
<svg class="a" style="left:41px;top:55px" width="15" height="16"><rect x="1.5" y="0.5" width="12" height="15" fill="#dde4f4" stroke="#3a4a9a"/><path d="M0.5 3H3M0.5 6H3M0.5 9H3M0.5 12H3" stroke="#3a4a9a"/><path d="M9 2L12.5 8H5.5Z" fill="#f8c010"/><circle cx="8" cy="11.5" r="2.5" fill="#e03030"/></svg>
<div class="t" style="left:62px;top:58px;color:#000;">Observateur d’événements</div>
<svg class="a" style="left:27px;top:79px" width="6" height="9"><path d="M0.8 0.8L4.5 4.5L0.8 8.2" stroke="#8a8a8a" fill="none" stroke-width="1.3"/></svg>
<svg class="a" style="left:41px;top:73px" width="15" height="15"><path d="M0.5 2.5H6L7.5 4H14.5V14.5H0.5Z" fill="#f2d88a" stroke="#c8a050" stroke-width="0.8"/><circle cx="5" cy="8.5" r="2" fill="#4a8a4a"/><circle cx="9" cy="9" r="2" fill="#3a6aa8"/><path d="M2 14Q5 10 8 14M6 14Q9 10.5 12 14" fill="#5a9ad8"/></svg>
<div class="t" style="left:62px;top:76px;color:#000;">Dossiers partagés</div>
<svg class="a" style="left:27px;top:97px" width="6" height="9"><path d="M0.8 0.8L4.5 4.5L0.8 8.2" stroke="#8a8a8a" fill="none" stroke-width="1.3"/></svg>
<svg class="a" style="left:41px;top:91px" width="16" height="16"><rect x="5.5" y="0.5" width="10" height="9" fill="#b8d0f0" stroke="#5a7aa8"/><rect x="7" y="2" width="7" height="6" fill="#2a5ad8"/><circle cx="4" cy="7" r="2.5" fill="#c89060"/><path d="M0 15Q1 10 4 10Q7 10 7.5 15Z" fill="#5aa85a"/><circle cx="9" cy="9" r="2.5" fill="#d8a070"/><path d="M5 16Q5.5 12 9 12Q12.5 12 13 16Z" fill="#7ab0e0"/></svg>
<div class="t" style="left:62px;top:94px;color:#000;">Utilisateurs et groupes locaux</div>
<svg class="a" style="left:27px;top:115px" width="6" height="9"><path d="M0.8 0.8L4.5 4.5L0.8 8.2" stroke="#8a8a8a" fill="none" stroke-width="1.3"/></svg>
<svg class="a" style="left:41px;top:109px" width="16" height="16"><circle cx="8" cy="8" r="7.3" fill="#fff" stroke="#6a6a6a" stroke-width="1.3"/><path d="M4 5Q6 8 5 11M4 11L11 4.5M9 11Q11 9 12 11" stroke="#d82020" stroke-width="1.5" fill="none"/></svg>
<div class="t" style="left:62px;top:112px;color:#000;">Performance</div>
<div class="a" style="left:39px;top:127px;width:150px;height:18px;background:#d9d9d9"></div>
<svg class="a" style="left:43px;top:127px" width="14" height="16"><rect x="4" y="0.5" width="5" height="8" fill="#2e2e2e"/><rect x="5" y="2" width="1.5" height="1.5" fill="#3c3"/><rect x="0.5" y="8.5" width="12" height="7" fill="#e4e4e4" stroke="#8a8a8a"/><rect x="2.5" y="10.5" width="1.5" height="2.5" fill="#222"/><rect x="9" y="10.5" width="1.5" height="2.5" fill="#222"/></svg>
<div class="t" style="left:62px;top:130px;color:#000;">Gestionnaire de périphériques</div>
<svg class="a" style="left:6px;top:151px" width="10" height="6"><path d="M0.8 0.8L5 5L9.2 0.8" stroke="#222" fill="none" stroke-width="1.3"/></svg>
<svg class="a" style="left:22px;top:144px" width="17" height="17"><rect x="0.5" y="9.5" width="14" height="6" rx="1" fill="#d8dce0" stroke="#7a8088"/><rect x="11" y="12" width="2" height="1.5" fill="#3c3"/><circle cx="5" cy="5" r="4.5" fill="#c8ccd0" stroke="#7a8088"/><rect x="8" y="2" width="8" height="5" fill="#2a8ad8" stroke="#6aa"/></svg>
<div class="t" style="left:43px;top:148px;color:#000;">Stockage</div>
<svg class="a" style="left:41px;top:162px" width="17" height="17"><rect x="4" y="1" width="12" height="3" fill="#d6d6d6"/><rect x="4" y="4" width="13" height="4" fill="#2a2a2a"/><circle cx="14" cy="6" r="1.2" fill="#3f3"/><rect x="0.5" y="8.5" width="11" height="7" fill="#e2e2e2" stroke="#777"/><rect x="2" y="10" width="2" height="3" fill="#222"/><rect x="8" y="10" width="2" height="3" fill="#222"/></svg>
<div class="t" style="left:62px;top:166px;color:#000;">Gestion des disques</div>
<svg class="a" style="left:7px;top:187px" width="6" height="9"><path d="M0.8 0.8L4.5 4.5L0.8 8.2" stroke="#8a8a8a" fill="none" stroke-width="1.3"/></svg>
<svg class="a" style="left:24px;top:179px" width="16" height="17"><rect x="0.5" y="0.5" width="7" height="16" fill="#d8dce0" stroke="#7a8088"/><path d="M2 3H6M2 5H6" stroke="#555"/><circle cx="11" cy="12" r="4" fill="#5a9ae0" stroke="#2a5aa8" stroke-dasharray="2 1"/><circle cx="11" cy="12" r="1.5" fill="#fff"/></svg>
<div class="t" style="left:43px;top:184px;color:#000;">Services et applications</div>
<div class="a" style="left:0px;top:519px;width:187px;height:16px;background:#f0f0f0"></div>
<div class="a" style="left:17px;top:525px;width:128px;height:2px;background:#868686"></div>
</div>
<div class="a" style="left:195px;top:82px;width:514px;height:535px;overflow:hidden">
<svg class="a" style="left:6px;top:6px" width="10" height="6"><path d="M0.8 0.8L5 5L9.2 0.8" stroke="#222" fill="none" stroke-width="1.3"/></svg>
<svg class="a" style="left:23px;top:0px" width="14" height="16"><rect x="4" y="0.5" width="5" height="8" fill="#2e2e2e"/><rect x="5" y="2" width="1.5" height="1.5" fill="#3c3"/><rect x="0.5" y="8.5" width="12" height="7" fill="#e4e4e4" stroke="#8a8a8a"/><rect x="2.5" y="10.5" width="1.5" height="2.5" fill="#222"/><rect x="9" y="10.5" width="1.5" height="2.5" fill="#222"/></svg>
<div class="t" style="left:43px;top:3px;color:#000;transform:scaleX(0.83);transform-origin:0 0">DESKTOP</div>
<svg class="a" style="left:25px;top:24px" width="10" height="6"><path d="M0.8 0.8L5 5L9.2 0.8" stroke="#222" fill="none" stroke-width="1.3"/></svg>
<svg class="a" style="left:41px;top:19px" width="17" height="17"><path d="M1 1.5H6.5L7.5 3V12.5L6.5 14H1.5Z" fill="#3a3a3a"/><rect x="1.8" y="3" width="1.6" height="1.6" fill="#3f3"/><rect x="0" y="14" width="8" height="2" fill="#222"/><circle cx="11" cy="5" r="4.3" fill="#fff" stroke="#b8b8b8" stroke-width="0.9"/><text x="11" y="8" font-family="Liberation Sans" font-size="7.5" font-weight="bold" fill="#2a78d8" text-anchor="middle">?</text></svg>
<div class="t" style="left:62px;top:21px;color:#000;">Autres périphériques</div>
<svg class="a" style="left:60px;top:37px" width="17" height="17"><path d="M1 1.5H6.5L7.5 3V12.5L6.5 14H1.5Z" fill="#3a3a3a"/><rect x="1.8" y="3" width="1.6" height="1.6" fill="#3f3"/><rect x="0" y="14" width="8" height="2" fill="#222"/><circle cx="11" cy="5" r="4.3" fill="#fff" stroke="#b8b8b8" stroke-width="0.9"/><text x="11" y="8" font-family="Liberation Sans" font-size="7.5" font-weight="bold" fill="#2a78d8" text-anchor="middle">?</text></svg>
<div class="t" style="left:81px;top:39px;color:#000;">Airoha App</div>
<svg class="a" style="left:60px;top:55px" width="17" height="17"><path d="M1 1.5H6.5L7.5 3V12.5L6.5 14H1.5Z" fill="#3a3a3a"/><rect x="1.8" y="3" width="1.6" height="1.6" fill="#3f3"/><rect x="0" y="14" width="8" height="2" fill="#222"/><circle cx="11" cy="5" r="4.3" fill="#fff" stroke="#b8b8b8" stroke-width="0.9"/><text x="11" y="8" font-family="Liberation Sans" font-size="7.5" font-weight="bold" fill="#2a78d8" text-anchor="middle">?</text></svg>
<div class="t" style="left:81px;top:57px;color:#000;">BluetoothRfcommServerInsecure</div>
<svg class="a" style="left:60px;top:73px" width="17" height="17"><path d="M1 1.5H6.5L7.5 3V12.5L6.5 14H1.5Z" fill="#3a3a3a"/><rect x="1.8" y="3" width="1.6" height="1.6" fill="#3f3"/><rect x="0" y="14" width="8" height="2" fill="#222"/><circle cx="11" cy="5" r="4.3" fill="#fff" stroke="#b8b8b8" stroke-width="0.9"/><text x="11" y="8" font-family="Liberation Sans" font-size="7.5" font-weight="bold" fill="#2a78d8" text-anchor="middle">?</text><path d="M7.5 16.5L11.5 9.5L15.5 16.5Z" fill="#f4b400" stroke="#9a6a00" stroke-width="0.6"/><path d="M11.5 11.8V14M11.5 14.8V15.6" stroke="#000" stroke-width="1.1"/></svg>
<div class="t" style="left:81px;top:75px;color:#000;">Contrôleur RAID</div>
<svg class="a" style="left:60px;top:91px" width="17" height="17"><path d="M1 1.5H6.5L7.5 3V12.5L6.5 14H1.5Z" fill="#3a3a3a"/><rect x="1.8" y="3" width="1.6" height="1.6" fill="#3f3"/><rect x="0" y="14" width="8" height="2" fill="#222"/><circle cx="11" cy="5" r="4.3" fill="#fff" stroke="#b8b8b8" stroke-width="0.9"/><text x="11" y="8" font-family="Liberation Sans" font-size="7.5" font-weight="bold" fill="#2a78d8" text-anchor="middle">?</text></svg>
<div class="t" style="left:81px;top:93px;color:#000;">Périphérique Bluetooth</div>
<svg class="a" style="left:60px;top:109px" width="17" height="17"><path d="M1 1.5H6.5L7.5 3V12.5L6.5 14H1.5Z" fill="#3a3a3a"/><rect x="1.8" y="3" width="1.6" height="1.6" fill="#3f3"/><rect x="0" y="14" width="8" height="2" fill="#222"/><circle cx="11" cy="5" r="4.3" fill="#fff" stroke="#b8b8b8" stroke-width="0.9"/><text x="11" y="8" font-family="Liberation Sans" font-size="7.5" font-weight="bold" fill="#2a78d8" text-anchor="middle">?</text></svg>
<div class="t" style="left:81px;top:111px;color:#000;">Périphérique Bluetooth</div>
<svg class="a" style="left:60px;top:127px" width="17" height="17"><path d="M1 1.5H6.5L7.5 3V12.5L6.5 14H1.5Z" fill="#3a3a3a"/><rect x="1.8" y="3" width="1.6" height="1.6" fill="#3f3"/><rect x="0" y="14" width="8" height="2" fill="#222"/><circle cx="11" cy="5" r="4.3" fill="#fff" stroke="#b8b8b8" stroke-width="0.9"/><text x="11" y="8" font-family="Liberation Sans" font-size="7.5" font-weight="bold" fill="#2a78d8" text-anchor="middle">?</text></svg>
<div class="t" style="left:81px;top:129px;color:#000;">Périphérique Bluetooth</div>
<svg class="a" style="left:60px;top:145px" width="17" height="17"><path d="M1 1.5H6.5L7.5 3V12.5L6.5 14H1.5Z" fill="#3a3a3a"/><rect x="1.8" y="3" width="1.6" height="1.6" fill="#3f3"/><rect x="0" y="14" width="8" height="2" fill="#222"/><circle cx="11" cy="5" r="4.3" fill="#fff" stroke="#b8b8b8" stroke-width="0.9"/><text x="11" y="8" font-family="Liberation Sans" font-size="7.5" font-weight="bold" fill="#2a78d8" text-anchor="middle">?</text></svg>
<div class="t" style="left:81px;top:147px;color:#000;">Périphérique Bluetooth</div>
<svg class="a" style="left:60px;top:163px" width="17" height="17"><path d="M1 1.5H6.5L7.5 3V12.5L6.5 14H1.5Z" fill="#3a3a3a"/><rect x="1.8" y="3" width="1.6" height="1.6" fill="#3f3"/><rect x="0" y="14" width="8" height="2" fill="#222"/><circle cx="11" cy="5" r="4.3" fill="#fff" stroke="#b8b8b8" stroke-width="0.9"/><text x="11" y="8" font-family="Liberation Sans" font-size="7.5" font-weight="bold" fill="#2a78d8" text-anchor="middle">?</text></svg>
<div class="t" style="left:81px;top:165px;color:#000;">SMS/MMS</div>
<svg class="a" style="left:27px;top:186px" width="6" height="9"><path d="M0.8 0.8L4.5 4.5L0.8 8.2" stroke="#8a8a8a" fill="none" stroke-width="1.3"/></svg>
<svg class="a" style="left:43px;top:180px" width="13" height="17"><ellipse cx="6.5" cy="8.5" rx="6" ry="8" fill="#1a7ae8"/><path d="M4 5L9 11L6.5 13.5V3.5L9 6L4 12" stroke="#fff" fill="none" stroke-width="1.1"/></svg>
<div class="t" style="left:62px;top:183px;color:#000;">Bluetooth</div>
<svg class="a" style="left:27px;top:204px" width="6" height="9"><path d="M0.8 0.8L4.5 4.5L0.8 8.2" stroke="#8a8a8a" fill="none" stroke-width="1.3"/></svg>
<svg class="a" style="left:41px;top:199px" width="17" height="16"><rect x="0.5" y="0.5" width="15" height="10" fill="#7ac0f8" stroke="#2a7ad0"/><rect x="6" y="7" width="10" height="6" fill="#2a8a4a" stroke="#666" stroke-width="0.5"/><rect x="7" y="13" width="6" height="2" fill="#f0a020"/></svg>
<div class="t" style="left:62px;top:201px;color:#000;">Cartes graphiques</div>
<svg class="a" style="left:27px;top:222px" width="6" height="9"><path d="M0.8 0.8L4.5 4.5L0.8 8.2" stroke="#8a8a8a" fill="none" stroke-width="1.3"/></svg>
<svg class="a" style="left:41px;top:217px" width="17" height="16"><rect x="5.5" y="0.5" width="11" height="8" fill="#7ac0f8" stroke="#2a7ad0"/><rect x="0.5" y="3.5" width="11" height="8" fill="#8ad0f8" stroke="#2a7ad0"/><rect x="0" y="13" width="16" height="2" fill="#c8c8c8"/><rect x="6" y="11.5" width="4" height="3" fill="#3ab03a"/></svg>
<div class="t" style="left:62px;top:219px;color:#000;">Cartes réseau</div>
<svg class="a" style="left:27px;top:240px" width="6" height="9"><path d="M0.8 0.8L4.5 4.5L0.8 8.2" stroke="#8a8a8a" fill="none" stroke-width="1.3"/></svg>
<svg class="a" style="left:41px;top:237px" width="17" height="12"><rect x="0.5" y="0.5" width="16" height="10" fill="#e8ecf0" stroke="#9aa0a8"/><path d="M2 3H15M2 5.5H15" stroke="#b0b8c0" stroke-dasharray="1.2 0.8"/><rect x="0" y="9" width="17" height="2.5" fill="#222"/></svg>
<div class="t" style="left:62px;top:237px;color:#000;">Claviers</div>
<svg class="a" style="left:27px;top:258px" width="6" height="9"><path d="M0.8 0.8L4.5 4.5L0.8 8.2" stroke="#8a8a8a" fill="none" stroke-width="1.3"/></svg>
<svg class="a" style="left:44px;top:253px" width="14" height="17"><rect x="1" y="2" width="5" height="12" fill="#2e2e2e"/><rect x="2" y="3" width="1.5" height="1.5" fill="#3c3"/><rect x="0" y="14" width="8" height="2" fill="#1e1e1e"/><path d="M7 3H9V1H11V3H13V6H11V7H7Z" fill="#3a8ad8"/></svg>
<div class="t" style="left:62px;top:255px;color:#000;">Composants logiciels</div>
<svg class="a" style="left:27px;top:276px" width="6" height="9"><path d="M0.8 0.8L4.5 4.5L0.8 8.2" stroke="#8a8a8a" fill="none" stroke-width="1.3"/></svg>
<svg class="a" style="left:44px;top:270px" width="10" height="17"><path d="M0.5 6H4L9 0.5V16.5L4 11H0.5Z" fill="#b8b8b8" stroke="#888" stroke-width="0.6"/></svg>
<div class="t" style="left:62px;top:273px;color:#000;">Contrôleurs audio, vidéo et jeu</div>
<svg class="a" style="left:27px;top:294px" width="6" height="9"><path d="M0.8 0.8L4.5 4.5L0.8 8.2" stroke="#8a8a8a" fill="none" stroke-width="1.3"/></svg>
<svg class="a" style="left:45px;top:288px" width="8" height="17"><rect x="2" y="0.5" width="4" height="4" fill="#fff" stroke="#666" stroke-width="0.8"/><rect x="0.5" y="4" width="7" height="8" rx="2" fill="#333"/><rect x="3" y="12" width="2" height="5" fill="#333"/></svg>
<div class="t" style="left:62px;top:291px;color:#000;">Contrôleurs de bus USB</div>
<svg class="a" style="left:27px;top:312px" width="6" height="9"><path d="M0.8 0.8L4.5 4.5L0.8 8.2" stroke="#8a8a8a" fill="none" stroke-width="1.3"/></svg>
<svg class="a" style="left:41px;top:307px" width="17" height="16"><path d="M1 4L4.5 0.8L8 4L4.5 7.2Z" fill="none" stroke="#333" stroke-width="1"/><path d="M4 4H9" stroke="#333"/><rect x="0.5" y="8" width="4" height="4" fill="#333"/><rect x="4" y="7" width="12" height="7" fill="#2a8a4a" stroke="#666" stroke-width="0.5"/><rect x="6" y="14" width="6" height="2" fill="#f0a020"/></svg>
<div class="t" style="left:62px;top:309px;color:#000;">Contrôleurs de stockage</div>
<svg class="a" style="left:27px;top:330px" width="6" height="9"><path d="M0.8 0.8L4.5 4.5L0.8 8.2" stroke="#8a8a8a" fill="none" stroke-width="1.3"/></svg>
<svg class="a" style="left:44px;top:324px" width="10" height="17"><path d="M0.5 6H4L9 0.5V16.5L4 11H0.5Z" fill="#b8b8b8" stroke="#888" stroke-width="0.6"/></svg>
<div class="t" style="left:62px;top:327px;color:#000;">Entrées et sorties audio</div>
<svg class="a" style="left:27px;top:348px" width="6" height="9"><path d="M0.8 0.8L4.5 4.5L0.8 8.2" stroke="#8a8a8a" fill="none" stroke-width="1.3"/></svg>
<svg class="a" style="left:41px;top:344px" width="17" height="14"><rect x="3" y="0.5" width="11" height="4" fill="#e0e0e0" stroke="#888" stroke-width="0.6"/><rect x="0.5" y="4" width="16" height="7" rx="1" fill="#c8c8c8" stroke="#888" stroke-width="0.6"/><rect x="4" y="7" width="9" height="4" fill="#222"/><rect x="3" y="11" width="11" height="2.5" fill="#fff" stroke="#888" stroke-width="0.5"/></svg>
<div class="t" style="left:62px;top:345px;color:#000;">Files d’attente à l’impression :</div>
<svg class="a" style="left:27px;top:366px" width="6" height="9"><path d="M0.8 0.8L4.5 4.5L0.8 8.2" stroke="#8a8a8a" fill="none" stroke-width="1.3"/></svg>
<svg class="a" style="left:41px;top:361px" width="17" height="17"><rect x="1.5" y="0.5" width="14" height="7" fill="#e8ecf0" stroke="#8a9098"/><path d="M3 3H14" stroke="#b0b8c0" stroke-dasharray="1.2 0.8"/><path d="M0.5 16L2 9H8L9.5 16L7 14H3Z" fill="#556"/><rect x="3.5" y="9.5" width="3" height="2" fill="#3a8ad8"/><rect x="11.5" y="9" width="4" height="7.5" rx="2" fill="#445" stroke="#889" stroke-width="0.5"/></svg>
<div class="t" style="left:62px;top:363px;color:#000;">Interfaces Homme-machine</div>
<svg class="a" style="left:25px;top:384px" width="10" height="6"><path d="M0.8 0.8L5 5L9.2 0.8" stroke="#222" fill="none" stroke-width="1.3"/></svg>
<svg class="a" style="left:42px;top:383px" width="15" height="9"><path d="M2 0.5H13L14.5 4H0.5Z" fill="#d8d8d8"/><rect x="0.5" y="4" width="14" height="4.5" fill="#2e2e2e" stroke="#9aa" stroke-width="0.4"/><rect x="11" y="5.5" width="1.5" height="1.5" fill="#3c3"/></svg>
<div class="t" style="left:62px;top:381px;color:#000;">Lecteurs de disque</div>
<svg class="a" style="left:27px;top:438px" width="6" height="9"><path d="M0.8 0.8L4.5 4.5L0.8 8.2" stroke="#8a8a8a" fill="none" stroke-width="1.3"/></svg>
<svg class="a" style="left:42px;top:432px" width="14" height="17"><rect x="2.5" y="1.5" width="9" height="14" fill="#2a2a2a" stroke="#111"/><path d="M0 3H2.5M0 5.5H2.5M0 8H2.5M0 10.5H2.5M0 13H2.5M11.5 3H14M11.5 5.5H14M11.5 8H14M11.5 10.5H14M11.5 13H14" stroke="#777"/><path d="M6 0.5H8" stroke="#999"/></svg>
<div class="t" style="left:62px;top:435px;color:#000;">Microprogramme</div>
<svg class="a" style="left:27px;top:456px" width="6" height="9"><path d="M0.8 0.8L4.5 4.5L0.8 8.2" stroke="#8a8a8a" fill="none" stroke-width="1.3"/></svg>
<svg class="a" style="left:41px;top:451px" width="17" height="16"><rect x="0.5" y="0.5" width="16" height="11" fill="#5ab8f8" stroke="#2a88d8"/><rect x="1" y="1" width="15" height="4" fill="#8ad0fa"/><rect x="7" y="12" width="3" height="2" fill="#aaa"/><rect x="4" y="14" width="9" height="1.5" fill="#aaa"/></svg>
<div class="t" style="left:62px;top:453px;color:#000;">Moniteurs</div>
<svg class="a" style="left:27px;top:474px" width="6" height="9"><path d="M0.8 0.8L4.5 4.5L0.8 8.2" stroke="#8a8a8a" fill="none" stroke-width="1.3"/></svg>
<svg class="a" style="left:41px;top:469px" width="17" height="16"><rect x="0.5" y="0.5" width="16" height="11" fill="#5ab8f8" stroke="#2a88d8"/><rect x="1" y="1" width="15" height="4" fill="#8ad0fa"/><rect x="7" y="12" width="3" height="2" fill="#aaa"/><rect x="4" y="14" width="9" height="1.5" fill="#aaa"/></svg>
<div class="t" style="left:62px;top:471px;color:#000;">Ordinateur</div>
<svg class="a" style="left:27px;top:492px" width="6" height="9"><path d="M0.8 0.8L4.5 4.5L0.8 8.2" stroke="#8a8a8a" fill="none" stroke-width="1.3"/></svg>
<svg class="a" style="left:44px;top:487px" width="14" height="17"><rect x="1" y="2" width="5" height="12" fill="#2e2e2e"/><rect x="2" y="3" width="1.5" height="1.5" fill="#3c3"/><rect x="0" y="14" width="8" height="2" fill="#1e1e1e"/><circle cx="10" cy="6" r="2.6" fill="none" stroke="#e0a020" stroke-width="1.5"/><path d="M10 8.5V15M10 12H12M10 14H12" stroke="#e0a020" stroke-width="1.3"/></svg>
<div class="t" style="left:62px;top:489px;color:#000;">Périphériques de sécurité</div>
<svg class="a" style="left:27px;top:510px" width="6" height="9"><path d="M0.8 0.8L4.5 4.5L0.8 8.2" stroke="#8a8a8a" fill="none" stroke-width="1.3"/></svg>
<svg class="a" style="left:44px;top:504px" width="11" height="17"><path d="M1 1H10V15.5Q5.5 17 1 15.5Z" fill="#a8b0b8" stroke="#7a8088" stroke-width="0.6"/><rect x="4" y="3" width="2" height="1.5" fill="#3a8ad8"/></svg>
<div class="t" style="left:62px;top:507px;color:#000;">Périphériques logiciels</div>
<svg class="a" style="left:27px;top:528px" width="6" height="9"><path d="M0.8 0.8L4.5 4.5L0.8 8.2" stroke="#8a8a8a" fill="none" stroke-width="1.3"/></svg>
<svg class="a" style="left:41px;top:523px" width="17" height="16"><rect x="0.5" y="0.5" width="5" height="13" fill="#2e2e2e"/><rect x="4" y="6" width="12" height="8" fill="#5ab8f8" stroke="#2a88d8"/></svg>
<div class="t" style="left:62px;top:525px;color:#000;">Périphériques système</div>
<svg class="a" style="left:61px;top:400px" width="15" height="9"><path d="M2 0.5H13L14.5 4H0.5Z" fill="#d8d8d8"/><rect x="0.5" y="4" width="14" height="4.5" fill="#2e2e2e" stroke="#9aa" stroke-width="0.4"/><rect x="11" y="5.5" width="1.5" height="1.5" fill="#3c3"/></svg>
<div class="t" style="left:81px;top:399px;color:#000;transform:scaleX(0.86);transform-origin:0 0">CT1000P3SSD8</div>
<svg class="a" style="left:61px;top:418px" width="15" height="9"><path d="M2 0.5H13L14.5 4H0.5Z" fill="#d8d8d8"/><rect x="0.5" y="4" width="14" height="4.5" fill="#2e2e2e" stroke="#9aa" stroke-width="0.4"/><rect x="11" y="5.5" width="1.5" height="1.5" fill="#3c3"/></svg>
<div class="t" style="left:81px;top:417px;color:#000;transform:scaleX(0.88);transform-origin:0 0">KINGSTON SNV2S1000G</div>
<div class="a" style="left:497px;top:0;width:17px;height:535px;background:#f0f0f0"></div>
<div class="a" style="left:504px;top:17px;width:2px;height:439px;background:#606060"></div>
</div>
<div class="a" style="left:287px;top:79px;width:77px;height:24px;background:#22ae4b;border-radius:8px"></div>
</div>
<div class="a" style="left:1892px;top:513px;width:12px;height:633px;background:linear-gradient(90deg,#d4d4d4,#ececec)"></div></body></html>
